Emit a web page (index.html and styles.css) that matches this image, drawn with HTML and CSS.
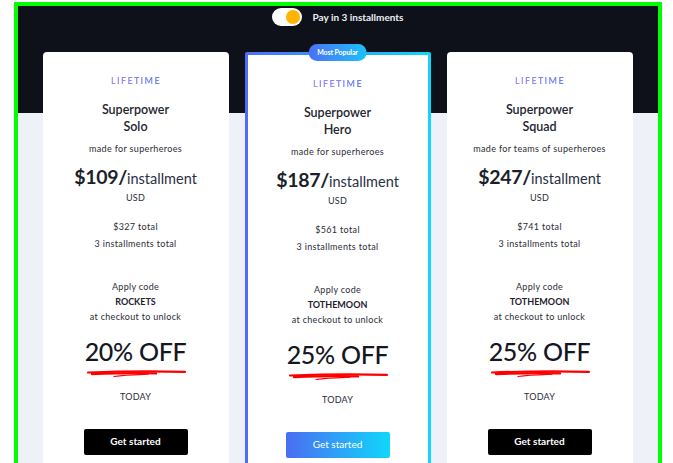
FILE: index.html
```html
<!DOCTYPE html>
<html>
<head>
<meta charset="utf-8">
<link rel="stylesheet" href="styles.css">
</head>
<body>
<div class="frame">
  <div class="toggle-row">
    <span class="toggle"><span class="knob"></span></span>
    <span class="toggle-label">Pay in 3 installments</span>
  </div>
  <div class="cards">
    <div class="card">
      <div class="tier">LIFETIME</div>
      <div class="title">Superpower<br>Solo</div>
      <div class="sub">made for superheroes</div>
      <div class="price"><span class="amt">$109/</span><span class="per">installment</span></div>
      <div class="cur">USD</div>
      <div class="totals">$327 total<br>3 installments total</div>
      <div class="code">Apply code<br><b>ROCKETS</b><br>at checkout to unlock</div>
      <div class="off">20% OFF</div>
      <svg class="scribble" viewBox="0 0 100 8" width="100" height="8"><path d="M2 2.5 C30 1.5 70 1.2 99 1.8" stroke="#f00" stroke-width="2.2" fill="none" stroke-linecap="round"/><path d="M6 4 C30 3.2 55 3 70 3.4" stroke="#f00" stroke-width="2.4" fill="none" stroke-linecap="round"/><path d="M28 6.5 C40 4.8 52 4.6 62 4.2" stroke="#f00" stroke-width="1.2" fill="none" stroke-linecap="round"/></svg>
      <div class="today">TODAY</div>
      <div class="btn">Get started</div>
    </div>
    <div class="card popular">
      <div class="badge">Most Popular</div>
      <div class="tier">LIFETIME</div>
      <div class="title">Superpower<br>Hero</div>
      <div class="sub">made for superheroes</div>
      <div class="price"><span class="amt">$187/</span><span class="per">installment</span></div>
      <div class="cur">USD</div>
      <div class="totals">$561 total<br>3 installments total</div>
      <div class="code">Apply code<br><b>TOTHEMOON</b><br>at checkout to unlock</div>
      <div class="off">25% OFF</div>
      <svg class="scribble" viewBox="0 0 100 8" width="100" height="8"><path d="M2 2.5 C30 1.5 70 1.2 99 1.8" stroke="#f00" stroke-width="2.2" fill="none" stroke-linecap="round"/><path d="M6 4 C30 3.2 55 3 70 3.4" stroke="#f00" stroke-width="2.4" fill="none" stroke-linecap="round"/><path d="M28 6.5 C40 4.8 52 4.6 62 4.2" stroke="#f00" stroke-width="1.2" fill="none" stroke-linecap="round"/></svg>
      <div class="today">TODAY</div>
      <div class="btn grad">Get started</div>
    </div>
    <div class="card">
      <div class="tier">LIFETIME</div>
      <div class="title">Superpower<br>Squad</div>
      <div class="sub">made for teams of superheroes</div>
      <div class="price"><span class="amt">$247/</span><span class="per">installment</span></div>
      <div class="cur">USD</div>
      <div class="totals">$741 total<br>3 installments total</div>
      <div class="code">Apply code<br><b>TOTHEMOON</b><br>at checkout to unlock</div>
      <div class="off">25% OFF</div>
      <svg class="scribble" viewBox="0 0 100 8" width="100" height="8"><path d="M2 2.5 C30 1.5 70 1.2 99 1.8" stroke="#f00" stroke-width="2.2" fill="none" stroke-linecap="round"/><path d="M6 4 C30 3.2 55 3 70 3.4" stroke="#f00" stroke-width="2.4" fill="none" stroke-linecap="round"/><path d="M28 6.5 C40 4.8 52 4.6 62 4.2" stroke="#f00" stroke-width="1.2" fill="none" stroke-linecap="round"/></svg>
      <div class="today">TODAY</div>
      <div class="btn">Get started</div>
    </div>
  </div>
</div>
</body>
</html>
```
FILE: styles.css
```css
html, body { margin: 0; padding: 0; background: #fff; }
body { font-family: Lato, "Open Sans", sans-serif; color: #1f2230; overflow: hidden; }

.frame {
  margin: 2px 0 0 14px;
  width: 640px;
  height: 470px;
  border: 4px solid #00ff00;
  border-bottom: none;
  background: linear-gradient(#0e1119 0, #0e1119 107px, #eef2f8 107px);
  box-sizing: content-box;
}

.toggle-row {
  display: flex;
  justify-content: center;
  align-items: center;
  gap: 10px;
  padding-top: 2px;
  height: 18px;
}
.toggle {
  width: 30px; height: 18px; border-radius: 9px; background: #fff;
  display: flex; align-items: center; justify-content: flex-end; padding: 0 2px; box-sizing: border-box;
}
.knob { width: 14px; height: 14px; border-radius: 50%; background: #ffb400; }
.toggle-label { color: #eceef6; font-size: 10px; font-weight: 700; }

.cards {
  display: flex;
  justify-content: center;
  gap: 16px;
  margin-top: 26px;
  margin-left: -1px;
}
.card {
  position: relative;
  width: 186px;
  box-sizing: border-box;
  background: #fff;
  border-radius: 4px;
  padding: 23px 0 20px;
  display: flex; flex-direction: column; align-items: center;
  text-align: center;
}
.card.popular {
  border: 3px solid transparent;
  border-radius: 2px;
  background: linear-gradient(#fff, #fff) padding-box, linear-gradient(90deg, #4f6df5, #10d6fb) border-box;
}
.badge {
  position: absolute; top: -11px; left: 50%; transform: translateX(-50%);
  background: linear-gradient(90deg, #4c70f4, #1ac2fb);
  color: #fff; font-size: 7px; font-weight: 700; padding: 0 9px; height: 17px; line-height: 17px;
  border-radius: 9px; white-space: nowrap; letter-spacing: -0.1px;
}
.tier {
  font-size: 9px; line-height: 12px; font-weight: 700; letter-spacing: 1.3px; padding-left: 1px;
  background: linear-gradient(90deg, #a98bf5, #5d7ef8);
  -webkit-background-clip: text; background-clip: text; color: transparent;
}
.title { margin-top: 13px; font-size: 12.5px; line-height: 17px; font-weight: 600; color: #22252f; padding-top: 1px; }
.sub { margin-top: 8px; font-size: 9px; line-height: 12px; color: #2a2c35; letter-spacing: 0.35px; }
.price { margin-top: 10px; line-height: 24px; white-space: nowrap; color: #1c1f2b; }
.amt { font-size: 19.5px; font-weight: 700; letter-spacing: -0.3px; }
.per { font-size: 14.5px; font-weight: 400; color: #2a2f45; }
.cur { margin-top: 1px; font-size: 9px; line-height: 12px; color: #2a2c35; letter-spacing: 0.3px; }
.totals { margin-top: 14px; font-size: 9px; line-height: 17px; color: #2a2c35; letter-spacing: 0.35px; }
.code { margin-top: 27px; font-size: 9px; line-height: 15px; color: #2a2c35; letter-spacing: 0.3px; }
.code b { font-weight: 700; color: #1f2230; letter-spacing: 0; }
.off { margin-top: 12px; font-size: 25px; line-height: 30px; font-weight: 500; color: #141722; letter-spacing: -0.3px; }
.scribble { margin-top: 4px; display: block; }
.today { margin-top: 13px; font-size: 9px; line-height: 12px; color: #2a2c35; letter-spacing: 0.2px; }
.btn {
  margin-top: 26px; width: 104px; height: 26px; line-height: 25px; border-radius: 2px;
  background: #000; color: #fff; font-size: 10px; font-weight: 700;
}
.btn.grad { background: linear-gradient(90deg, #4a6df2, #10d6fb); font-weight: 400; }
```
